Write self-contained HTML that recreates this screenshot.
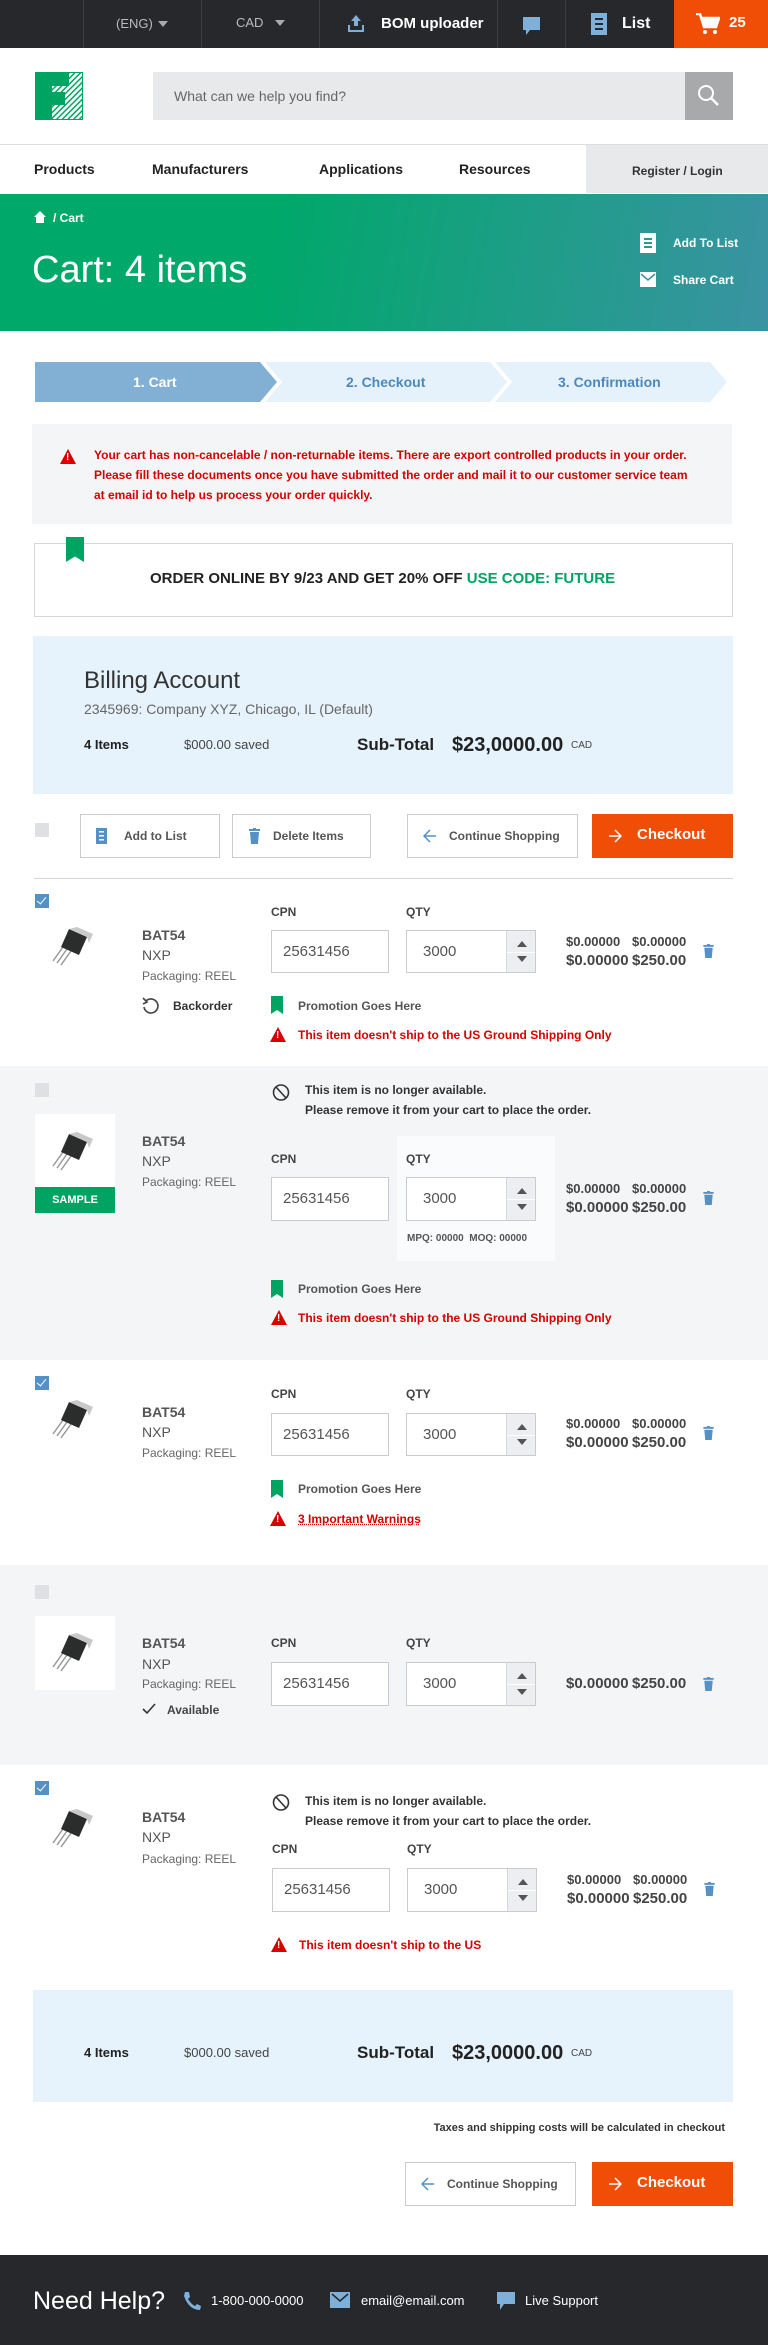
<!DOCTYPE html>
<html><head><meta charset="utf-8"><style>
*{margin:0;padding:0;box-sizing:border-box}
body{width:768px;height:2345px;position:relative;font-family:"Liberation Sans",Arial,sans-serif;background:#fff;color:#222;overflow:hidden}
.a{position:absolute}
.t{position:absolute;line-height:16px;white-space:nowrap}
.b{font-weight:bold}
.sep{position:absolute;top:0;width:1px;height:48px;background:#3d3e43}
.inp{position:absolute;background:#fff;border:1px solid #c9cbcf;font-size:15px;color:#555;padding-left:11px;line-height:42px}
.spin{position:absolute;right:0;top:0;width:29px;height:100%;background:#eceef1;border-left:1px solid #d5d7db}
.spin:before{content:"";position:absolute;left:10px;top:10px;border:5px solid transparent;border-bottom:6px solid #555;border-top:0}
.spin:after{content:"";position:absolute;left:10px;bottom:10px;border:5px solid transparent;border-top:6px solid #555;border-bottom:0}
.spin i{position:absolute;left:0;right:0;top:50%;height:1px;background:#fff}
.lbl{font-size:12px;font-weight:bold;color:#444}
.price{font-size:13px;font-weight:bold;color:#444}
.price2{font-size:15px;font-weight:bold;color:#444}
.btn{position:absolute;border:1px solid #c9cbcf;background:#fff;font-size:12px;font-weight:bold;color:#555}
.cb{position:absolute;left:35px;width:14px;height:14px}
.cbon{background:#5591c4}
.cbon:after{content:"";position:absolute;left:4px;top:1px;width:4px;height:8px;border:solid #fff;border-width:0 1.5px 1.5px 0;transform:rotate(40deg)}
.cboff{background:#dfe0e3}
.bm{position:absolute;width:12px;height:18px;background:#00a462;clip-path:polygon(0 0,100% 0,100% 100%,50% 78%,0 100%)}
.warn{position:absolute;width:0;height:0;border-left:8px solid transparent;border-right:8px solid transparent;border-bottom:15px solid #d60000}
.warn:after{content:"!";position:absolute;left:-2px;top:3px;color:#fff;font-size:10px;font-weight:bold;line-height:11px}
.red{color:#d60000;font-weight:bold;font-size:12px}
.trash{position:absolute;width:11px;height:14px}
.grey{position:absolute;left:0;width:768px;background:#f4f5f7}
</style></head><body>

<!-- top bar -->
<div class="a" style="left:0;top:0;width:768px;height:48px;background:#27282c"></div>
<div class="sep" style="left:83px"></div><div class="sep" style="left:201px"></div><div class="sep" style="left:319px"></div><div class="sep" style="left:497px"></div><div class="sep" style="left:565px"></div>
<div class="t" style="left:116px;top:16px;color:#bbb;font-size:13px">(ENG)</div>
<div class="a" style="left:158px;top:21px;border:5px solid transparent;border-top:6px solid #aaa"></div>
<div class="t" style="left:236px;top:15px;color:#bbb;font-size:13px">CAD</div>
<div class="a" style="left:275px;top:20px;border:5px solid transparent;border-top:6px solid #aaa"></div>
<svg class="a" style="left:346px;top:14px" width="20" height="20" viewBox="0 0 20 20"><path d="M10 1 L15 7 H12 V12 H8 V7 H5Z" fill="#7eb0d9"/><path d="M2 11 V18 H18 V11 H16 V16 H4 V11Z" fill="#7eb0d9"/></svg>
<div class="t b" style="left:381px;top:16px;color:#fff;font-size:15px">BOM uploader</div>
<svg class="a" style="left:522px;top:16px" width="20" height="20" viewBox="0 0 20 20"><path d="M1 1 H18 V14 H8 L4 19 V14 H1Z" fill="#7eb0d9"/></svg>
<svg class="a" style="left:591px;top:13px" width="16" height="22" viewBox="0 0 16 22"><rect width="16" height="22" fill="#7eb0d9"/><rect x="4" y="5" width="8" height="2" fill="#27282c"/><rect x="4" y="10" width="8" height="2" fill="#27282c"/><rect x="4" y="15" width="8" height="2" fill="#27282c"/></svg>
<div class="t b" style="left:622px;top:16px;color:#fff;font-size:16px">List</div>
<div class="a" style="left:674px;top:0;width:94px;height:48px;background:#f04e06"></div>
<svg class="a" style="left:696px;top:13px" width="24" height="22" viewBox="0 0 24 22"><path d="M0 1 H4 L8 14 H20 L23 5 H6" fill="none" stroke="#fff" stroke-width="2.5"/><circle cx="9" cy="19" r="2" fill="#fff"/><circle cx="19" cy="19" r="2" fill="#fff"/><path d="M6 5 H23 L20 14 H8Z" fill="#fff"/></svg>
<div class="t b" style="left:729px;top:15px;color:#fff;font-size:15px">25</div>

<!-- logo + search -->
<svg class="a" style="left:35px;top:72px" width="48" height="48" viewBox="0 0 48 48"><defs><pattern id="h" width="4" height="4" patternUnits="userSpaceOnUse" patternTransform="rotate(45)"><rect width="4" height="4" fill="#fff"/><rect width="1.5" height="4" fill="#00a462"/></pattern></defs><rect x="0.5" y="0.5" width="47" height="47" fill="url(#h)" stroke="#00a462"/><path d="M1 1 H34 V14 H17 V20 H30 V33 H17 V47 H1Z" fill="#00a462"/></svg>
<div class="a" style="left:153px;top:72px;width:532px;height:48px;background:#e8e9eb"></div>
<div class="t" style="left:174px;top:88px;color:#666;font-size:14px">What can we help you find?</div>
<div class="a" style="left:685px;top:72px;width:48px;height:48px;background:#a8a9ab"></div>
<svg class="a" style="left:697px;top:84px" width="24" height="24" viewBox="0 0 24 24"><circle cx="9" cy="9" r="7" fill="none" stroke="#fff" stroke-width="2"/><path d="M14 14 L21 21" stroke="#fff" stroke-width="2.5"/></svg>

<!-- nav -->
<div class="a" style="left:0;top:144px;width:768px;height:1px;background:#dcdde0"></div>
<div class="a" style="left:586px;top:145px;width:182px;height:48px;background:#e8e9eb"></div>
<div class="t b" style="left:34px;top:161px;font-size:14px">Products</div>
<div class="t b" style="left:152px;top:161px;font-size:14px">Manufacturers</div>
<div class="t b" style="left:319px;top:161px;font-size:14px">Applications</div>
<div class="t b" style="left:459px;top:161px;font-size:14px">Resources</div>
<div class="t b" style="left:632px;top:163px;font-size:12px;color:#333">Register / Login</div>

<!-- hero -->
<div class="a" style="left:0;top:194px;width:768px;height:137px;background:linear-gradient(100deg,#00a86a 0%,#00a86a 35%,#3a93a3 100%)"></div>
<svg class="a" style="left:34px;top:211px" width="12" height="12" viewBox="0 0 12 12"><path d="M6 0 L12 6 H10 V12 H2 V6 H0Z" fill="#fff"/></svg>
<div class="t b" style="left:53px;top:210px;color:#fff;font-size:12px">/ Cart</div>
<div class="t" style="left:32px;top:247px;color:#fff;font-size:38px;line-height:46px">Cart: 4 items</div>
<svg class="a" style="left:640px;top:233px" width="16" height="20" viewBox="0 0 16 20"><rect width="16" height="20" fill="#fff"/><rect x="4" y="5" width="8" height="2" fill="#259a8f"/><rect x="4" y="9" width="8" height="2" fill="#259a8f"/><rect x="4" y="13" width="8" height="2" fill="#259a8f"/></svg>
<div class="t b" style="left:673px;top:235px;color:#fff;font-size:12px">Add To List</div>
<svg class="a" style="left:640px;top:272px" width="16" height="15" viewBox="0 0 16 15"><rect width="16" height="15" fill="#fff"/><path d="M1 2 L8 8 L15 2" fill="none" stroke="#3a93a3" stroke-width="1.5"/></svg>
<div class="t b" style="left:673px;top:272px;color:#fff;font-size:12px">Share Cart</div>

<!-- steps -->
<svg class="a" style="left:35px;top:362px" width="695" height="40" viewBox="0 0 695 40"><path d="M0 0 H225 L242 20 L225 40 H0Z" fill="#82b0d4"/><path d="M230 0 H455 L472 20 L455 40 H230 L247 20Z" fill="#e6f2fb"/><path d="M460 0 H675 L692 20 L675 40 H460 L477 20Z" fill="#e6f2fb"/></svg>
<div class="t b" style="left:133px;top:374px;color:#fff;font-size:14px">1. Cart</div>
<div class="t b" style="left:346px;top:374px;color:#4d88bd;font-size:14px">2. Checkout</div>
<div class="t b" style="left:558px;top:374px;color:#4d88bd;font-size:14px">3. Confirmation</div>

<!-- warning box -->
<div class="a" style="left:32px;top:424px;width:700px;height:100px;background:#f4f5f7"></div>
<div class="warn" style="left:60px;top:449px"></div>
<div class="t red" style="left:94px;top:445px;font-size:12px;line-height:20px">Your cart has non-cancelable / non-returnable items. There are export controlled products in your order.<br>Please fill these documents once you have submitted the order and mail it to our customer service team<br>at email id to help us process your order quickly.</div>

<!-- promo -->
<div class="a" style="left:34px;top:543px;width:699px;height:74px;border:1px solid #d5d7db"></div>
<div class="bm" style="left:66px;top:537px;width:18px;height:25px"></div>
<div class="t b" style="left:150px;top:571px;font-size:15px">ORDER ONLINE BY 9/23 AND GET 20% OFF <span style="color:#00a462">USE CODE: FUTURE</span></div>

<!-- billing -->
<div class="a" style="left:33px;top:636px;width:700px;height:158px;background:#e6f3fc"></div>
<div class="t" style="left:84px;top:667px;font-size:24px;line-height:28px;color:#333">Billing Account</div>
<div class="t" style="left:84px;top:701px;font-size:14px;color:#666">2345969: Company XYZ, Chicago, IL (Default)</div>
<div class="t b" style="left:84px;top:737px;font-size:13px">4 Items</div>
<div class="t" style="left:184px;top:737px;font-size:13px;color:#444">$000.00 saved</div>
<div class="t b" style="left:357px;top:735px;font-size:17px;line-height:20px">Sub-Total</div>
<div class="t b" style="left:452px;top:733px;font-size:20px;line-height:24px">$23,0000.00</div>
<div class="t" style="left:571px;top:738px;font-size:10px;color:#444">CAD</div>

<!-- actions -->
<div class="cb cboff" style="top:823px"></div>
<div class="btn" style="left:80px;top:814px;width:140px;height:44px"></div>
<svg class="a" style="left:96px;top:828px" width="11" height="16" viewBox="0 0 11 16"><rect width="11" height="16" fill="#5591c4"/><rect x="3" y="3" width="5" height="1.5" fill="#fff"/><rect x="3" y="7" width="5" height="1.5" fill="#fff"/><rect x="3" y="11" width="5" height="1.5" fill="#fff"/></svg>
<div class="t b" style="left:124px;top:828px;font-size:12px;color:#555">Add to List</div>
<div class="btn" style="left:232px;top:814px;width:139px;height:44px"></div>
<svg class="a" style="left:249px;top:828px" width="11" height="16" viewBox="0 0 11 16"><rect x="0" y="1" width="11" height="2" fill="#5591c4"/><rect x="4" y="0" width="3" height="2" fill="#5591c4"/><path d="M1 4 H10 L9 16 H2Z" fill="#5591c4"/></svg>
<div class="t b" style="left:273px;top:828px;font-size:12px;color:#555">Delete Items</div>
<div class="btn" style="left:407px;top:814px;width:171px;height:44px"></div>
<svg class="a" style="left:423px;top:829px" width="14" height="14" viewBox="0 0 14 14"><path d="M13 7 H2 M7 1 L1 7 L7 13" fill="none" stroke="#5591c4" stroke-width="1.5"/></svg>
<div class="t b" style="left:449px;top:828px;font-size:12px;color:#555">Continue Shopping</div>
<div class="a" style="left:592px;top:814px;width:141px;height:44px;background:#f04e06"></div>
<svg class="a" style="left:608px;top:829px" width="14" height="14" viewBox="0 0 14 14"><path d="M1 7 H12 M7 1 L13 7 L7 13" fill="none" stroke="#fff" stroke-width="1.5"/></svg>
<div class="t b" style="left:637px;top:827px;font-size:15px;color:#fff">Checkout</div>
<div class="a" style="left:34px;top:878px;width:699px;height:1px;background:#d5d7db"></div>

<!-- gray bands -->
<div class="grey" style="top:1066px;height:294px"></div>
<div class="grey" style="top:1565px;height:200px"></div>

<svg width="0" height="0" style="position:absolute"><defs>
<g id="tr"><path d="M12 22 L2 36 M16 24 L6 38 M20 26 L10 40" stroke="#999" stroke-width="1.5"/><path d="M18 4 L36 12 L28 30 L10 22Z" fill="#2a2d2c"/><path d="M26 2 L42 9 L38 18 L36 12 L18 4Z" fill="#c9c9c9"/></g>
<g id="tc"><rect x="0" y="1" width="11" height="2" fill="#5591c4"/><rect x="4" y="0" width="3" height="2" fill="#5591c4"/><path d="M1 4 H10 L9 15 H2Z" fill="#5591c4"/></g>
</defs></svg>

<!-- ITEM 1 -->
<div class="cb cbon" style="top:894px"></div>
<svg class="a" style="left:43px;top:925px" width="60" height="44" viewBox="0 0 44 44"><use href="#tr"/></svg>
<div class="t b" style="left:142px;top:927px;font-size:14px;color:#555">BAT54</div>
<div class="t" style="left:142px;top:947px;font-size:14px;color:#555">NXP</div>
<div class="t" style="left:142px;top:968px;font-size:12px;color:#666">Packaging: REEL</div>
<div class="t lbl" style="left:271px;top:904px">CPN</div>
<div class="t lbl" style="left:406px;top:904px">QTY</div>
<div class="inp" style="left:271px;top:930px;width:118px;height:43px">25631456</div>
<div class="inp" style="left:406px;top:930px;width:130px;height:43px;padding-left:16px">3000<div class="spin"><i></i></div></div>
<div class="t price" style="left:566px;top:934px">$0.00000</div><div class="t price" style="left:632px;top:934px">$0.00000</div>
<div class="t price2" style="left:566px;top:953px">$0.00000</div><div class="t price2" style="left:632px;top:953px">$250.00</div>
<svg class="trash" style="left:703px;top:944px" viewBox="0 0 11 15"><use href="#tc"/></svg>
<svg class="a" style="left:142px;top:997px" width="17" height="18" viewBox="0 0 17 18"><path d="M4 4 A7 7 0 1 1 2 10" fill="none" stroke="#444" stroke-width="1.6"/><path d="M1 1 L5 5 L1 7" fill="none" stroke="#444" stroke-width="1.6"/></svg>
<div class="t b" style="left:173px;top:998px;font-size:12px;color:#333">Backorder</div>
<div class="bm" style="left:271px;top:996px"></div>
<div class="t b" style="left:298px;top:998px;font-size:12px;color:#555">Promotion Goes Here</div>
<div class="warn" style="left:270px;top:1027px"></div>
<div class="t red" style="left:298px;top:1027px">This item doesn't ship to the US Ground Shipping Only</div>

<!-- ITEM 2 -->
<div class="cb cboff" style="top:1083px"></div>
<svg class="a" style="left:272px;top:1083px" width="18" height="19" viewBox="0 0 18 19"><circle cx="9" cy="9.5" r="7.5" fill="none" stroke="#333" stroke-width="1.6"/><path d="M4 4 L14 15" stroke="#333" stroke-width="1.6"/></svg>
<div class="t b" style="left:305px;top:1080px;font-size:12px;color:#333;line-height:20px">This item is no longer available.<br>Please remove it from your cart to place the order.</div>
<div class="a" style="left:35px;top:1114px;width:80px;height:73px;background:#fff"></div>
<svg class="a" style="left:43px;top:1130px" width="60" height="44" viewBox="0 0 44 44"><use href="#tr"/></svg>
<div class="a" style="left:35px;top:1187px;width:80px;height:26px;background:#00a462;color:#fff;font-size:11px;font-weight:bold;text-align:center;line-height:26px">SAMPLE</div>
<div class="t b" style="left:142px;top:1133px;font-size:14px;color:#555">BAT54</div>
<div class="t" style="left:142px;top:1153px;font-size:14px;color:#555">NXP</div>
<div class="t" style="left:142px;top:1174px;font-size:12px;color:#666">Packaging: REEL</div>
<div class="a" style="left:397px;top:1136px;width:158px;height:125px;background:#fafbfc"></div>
<div class="t lbl" style="left:271px;top:1151px">CPN</div>
<div class="t lbl" style="left:406px;top:1151px">QTY</div>
<div class="inp" style="left:271px;top:1177px;width:118px;height:44px">25631456</div>
<div class="inp" style="left:406px;top:1177px;width:130px;height:44px;padding-left:16px">3000<div class="spin"><i></i></div></div>
<div class="t b" style="left:407px;top:1231px;font-size:10px;color:#555">MPQ: 00000&nbsp;&nbsp;MOQ: 00000</div>
<div class="t price" style="left:566px;top:1181px">$0.00000</div><div class="t price" style="left:632px;top:1181px">$0.00000</div>
<div class="t price2" style="left:566px;top:1200px">$0.00000</div><div class="t price2" style="left:632px;top:1200px">$250.00</div>
<svg class="trash" style="left:703px;top:1191px" viewBox="0 0 11 15"><use href="#tc"/></svg>
<div class="bm" style="left:271px;top:1280px"></div>
<div class="t b" style="left:298px;top:1281px;font-size:12px;color:#555">Promotion Goes Here</div>
<div class="warn" style="left:271px;top:1310px"></div>
<div class="t red" style="left:298px;top:1310px">This item doesn't ship to the US Ground Shipping Only</div>

<!-- ITEM 3 -->
<div class="cb cbon" style="top:1376px"></div>
<svg class="a" style="left:43px;top:1398px" width="60" height="44" viewBox="0 0 44 44"><use href="#tr"/></svg>
<div class="t b" style="left:142px;top:1404px;font-size:14px;color:#555">BAT54</div>
<div class="t" style="left:142px;top:1424px;font-size:14px;color:#555">NXP</div>
<div class="t" style="left:142px;top:1445px;font-size:12px;color:#666">Packaging: REEL</div>
<div class="t lbl" style="left:271px;top:1386px">CPN</div>
<div class="t lbl" style="left:406px;top:1386px">QTY</div>
<div class="inp" style="left:271px;top:1413px;width:118px;height:43px">25631456</div>
<div class="inp" style="left:406px;top:1413px;width:130px;height:43px;padding-left:16px">3000<div class="spin"><i></i></div></div>
<div class="t price" style="left:566px;top:1416px">$0.00000</div><div class="t price" style="left:632px;top:1416px">$0.00000</div>
<div class="t price2" style="left:566px;top:1435px">$0.00000</div><div class="t price2" style="left:632px;top:1435px">$250.00</div>
<svg class="trash" style="left:703px;top:1426px" viewBox="0 0 11 15"><use href="#tc"/></svg>
<div class="bm" style="left:271px;top:1480px"></div>
<div class="t b" style="left:298px;top:1481px;font-size:12px;color:#555">Promotion Goes Here</div>
<div class="warn" style="left:270px;top:1511px"></div>
<div class="t red" style="left:298px;top:1511px;text-decoration:underline dotted">3 Important Warnings</div>

<!-- ITEM 4 -->
<div class="cb cboff" style="top:1585px"></div>
<div class="a" style="left:35px;top:1616px;width:80px;height:74px;background:#fff"></div>
<svg class="a" style="left:43px;top:1631px" width="60" height="44" viewBox="0 0 44 44"><use href="#tr"/></svg>
<div class="t b" style="left:142px;top:1635px;font-size:14px;color:#555">BAT54</div>
<div class="t" style="left:142px;top:1656px;font-size:14px;color:#555">NXP</div>
<div class="t" style="left:142px;top:1676px;font-size:12px;color:#666">Packaging: REEL</div>
<svg class="a" style="left:142px;top:1703px" width="14" height="12" viewBox="0 0 14 12"><path d="M1 6 L5 10 L13 1" fill="none" stroke="#333" stroke-width="1.6"/></svg>
<div class="t b" style="left:167px;top:1702px;font-size:12px;color:#444">Available</div>
<div class="t lbl" style="left:271px;top:1635px">CPN</div>
<div class="t lbl" style="left:406px;top:1635px">QTY</div>
<div class="inp" style="left:271px;top:1662px;width:118px;height:44px">25631456</div>
<div class="inp" style="left:406px;top:1662px;width:130px;height:44px;padding-left:16px">3000<div class="spin"><i></i></div></div>
<div class="t price2" style="left:566px;top:1676px">$0.00000</div><div class="t price2" style="left:632px;top:1676px">$250.00</div>
<svg class="trash" style="left:703px;top:1677px" viewBox="0 0 11 15"><use href="#tc"/></svg>

<!-- ITEM 5 -->
<div class="cb cbon" style="top:1781px"></div>
<svg class="a" style="left:43px;top:1807px" width="60" height="44" viewBox="0 0 44 44"><use href="#tr"/></svg>
<div class="t b" style="left:142px;top:1809px;font-size:14px;color:#555">BAT54</div>
<div class="t" style="left:142px;top:1829px;font-size:14px;color:#555">NXP</div>
<div class="t" style="left:142px;top:1851px;font-size:12px;color:#666">Packaging: REEL</div>
<svg class="a" style="left:272px;top:1793px" width="18" height="19" viewBox="0 0 18 19"><circle cx="9" cy="9.5" r="7.5" fill="none" stroke="#333" stroke-width="1.6"/><path d="M4 4 L14 15" stroke="#333" stroke-width="1.6"/></svg>
<div class="t b" style="left:305px;top:1791px;font-size:12px;color:#333;line-height:20px">This item is no longer available.<br>Please remove it from your cart to place the order.</div>
<div class="t lbl" style="left:272px;top:1841px">CPN</div>
<div class="t lbl" style="left:407px;top:1841px">QTY</div>
<div class="inp" style="left:272px;top:1868px;width:118px;height:44px">25631456</div>
<div class="inp" style="left:407px;top:1868px;width:130px;height:44px;padding-left:16px">3000<div class="spin"><i></i></div></div>
<div class="t price" style="left:567px;top:1872px">$0.00000</div><div class="t price" style="left:633px;top:1872px">$0.00000</div>
<div class="t price2" style="left:567px;top:1891px">$0.00000</div><div class="t price2" style="left:633px;top:1891px">$250.00</div>
<svg class="trash" style="left:704px;top:1882px" viewBox="0 0 11 15"><use href="#tc"/></svg>
<div class="warn" style="left:271px;top:1937px"></div>
<div class="t red" style="left:299px;top:1937px">This item doesn't ship to the US</div>

<!-- summary -->
<div class="a" style="left:33px;top:1990px;width:700px;height:112px;background:#e6f3fc"></div>
<div class="t b" style="left:84px;top:2045px;font-size:13px">4 Items</div>
<div class="t" style="left:184px;top:2045px;font-size:13px;color:#444">$000.00 saved</div>
<div class="t b" style="left:357px;top:2043px;font-size:17px;line-height:20px">Sub-Total</div>
<div class="t b" style="left:452px;top:2041px;font-size:20px;line-height:24px">$23,0000.00</div>
<div class="t" style="left:571px;top:2046px;font-size:10px;color:#444">CAD</div>
<div class="t b" style="right:43px;top:2120px;font-size:11px;color:#333">Taxes and shipping costs will be calculated in checkout</div>
<div class="btn" style="left:405px;top:2162px;width:171px;height:44px"></div>
<svg class="a" style="left:421px;top:2177px" width="14" height="14" viewBox="0 0 14 14"><path d="M13 7 H2 M7 1 L1 7 L7 13" fill="none" stroke="#5591c4" stroke-width="1.5"/></svg>
<div class="t b" style="left:447px;top:2176px;font-size:12px;color:#555">Continue Shopping</div>
<div class="a" style="left:592px;top:2162px;width:141px;height:44px;background:#f04e06"></div>
<svg class="a" style="left:608px;top:2177px" width="14" height="14" viewBox="0 0 14 14"><path d="M1 7 H12 M7 1 L13 7 L7 13" fill="none" stroke="#fff" stroke-width="1.5"/></svg>
<div class="t b" style="left:637px;top:2175px;font-size:15px;color:#fff">Checkout</div>

<!-- footer -->
<div class="a" style="left:0;top:2255px;width:768px;height:90px;background:#27282c"></div>
<div class="t" style="left:33px;top:2286px;font-size:25px;line-height:30px;color:#fff">Need Help?</div>
<svg class="a" style="left:183px;top:2291px" width="18" height="20" viewBox="0 0 18 20"><path d="M2 1 L6 1 L7 6 L5 8 Q8 13 12 15 L14 13 L18 15 L17 19 Q6 19 1 5Z" fill="#7eb0d9"/></svg>
<div class="t" style="left:211px;top:2293px;font-size:13px;color:#fff">1-800-000-0000</div>
<svg class="a" style="left:330px;top:2292px" width="20" height="16" viewBox="0 0 20 16"><rect width="20" height="16" fill="#7eb0d9"/><path d="M2 2 L10 9 L18 2" fill="none" stroke="#27282c" stroke-width="1.5"/></svg>
<div class="t" style="left:361px;top:2293px;font-size:13px;color:#fff">email@email.com</div>
<svg class="a" style="left:497px;top:2292px" width="18" height="18" viewBox="0 0 18 18"><path d="M0 0 H18 V12 H7 L3 18 V12 H0Z" fill="#7eb0d9"/></svg>
<div class="t" style="left:525px;top:2293px;font-size:13px;color:#fff">Live Support</div>
</body></html>
